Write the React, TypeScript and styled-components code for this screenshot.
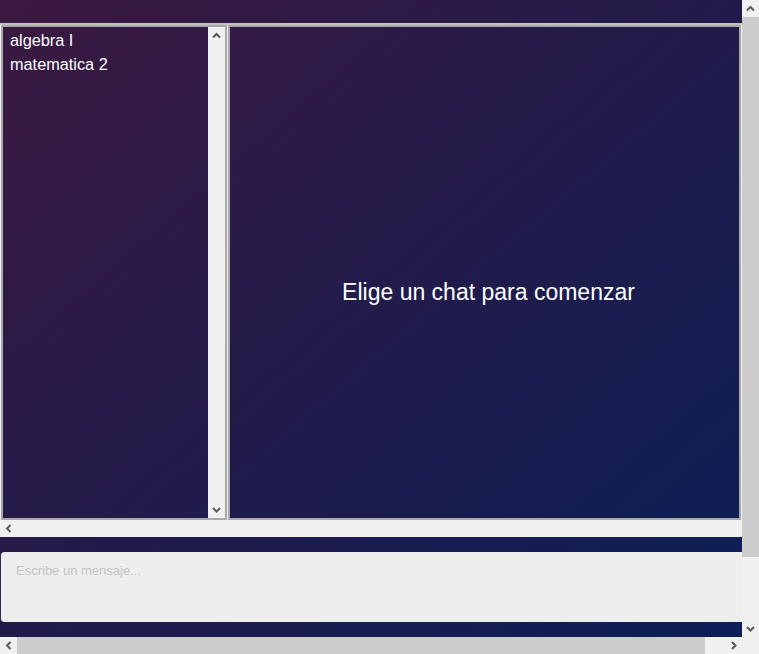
import React from 'react';
import styled, { createGlobalStyle, css } from 'styled-components';

const GlobalStyle = createGlobalStyle`
  html, body {
    margin: 0;
    padding: 0;
    overflow: hidden;
    font-family: "Liberation Sans", Arial, sans-serif;
  }
  * {
    box-sizing: border-box;
  }
`

const gradient = css`
  background: linear-gradient(to bottom right, #3c1940 0%, #231b4a 45%, #0a1f57 100%);
  background-attachment: fixed;
`

const Window = styled.div`
  display: grid;
  grid-template-columns: 742px 17px;
  grid-template-rows: 637px 17px;
  width: 759px;
  height: 654px;
`

const Viewport = styled.div`
  overflow: hidden;
`

const Page = styled.div`
  ${gradient};
  width: 763px;
  height: 711px;
  padding-top: 23px;
  display: flex;
  flex-direction: column;
`

const ChatFrame = styled.div`
  background: #f0f0f0;
  border-top: 2px solid #c3c3c3;
  display: flex;
  flex-direction: column;
`

const PanelRow = styled.div`
  display: flex;
  gap: 1px;
  padding: 0 1px;
  height: 495px;
`

const Panel = styled.div<{ $width: number }>`
  ${gradient};
  width: ${p => p.$width}px;
  border: 2px solid #a9a9a9;
  display: flex;
`

const ChatList = styled.ul`
  flex: 1;
  margin: 0;
  padding: 1px 0;
  list-style: none;
`

const ChatItem = styled.li`
  padding: 4px 7px;
  color: #ffffff;
  font-size: 16.3px;
  line-height: 16px;
  cursor: pointer;
`

const EmptyChat = styled.div`
  flex: 1;
  display: flex;
  align-items: center;
  justify-content: center;
  padding: 40px 0 0 8px;
  color: #ffffff;
  font-size: 23px;
`

const Scrollbar = styled.div<{ $vertical?: boolean }>`
  display: flex;
  flex-direction: ${p => (p.$vertical ? 'column' : 'row')};
  background: #f0f0f0;
  ${p => (p.$vertical ? 'width: 17px;' : 'height: 17px;')}
  flex-shrink: 0;
`

const Thumb = styled.div<{ $vertical?: boolean; $size: number }>`
  background: #cdcdcd;
  flex-shrink: 0;
  ${p => (p.$vertical ? `height: ${p.$size}px;` : `width: ${p.$size}px;`)}
`

const Track = styled.div`
  flex: 1;
`

const ArrowBox = styled.div`
  width: 17px;
  height: 17px;
  flex-shrink: 0;
  display: flex;
  align-items: center;
  justify-content: center;
`

const Corner = styled.div`
  background: #f0f0f0;
`

const Composer = styled.textarea`
  margin-top: 15px;
  width: 100%;
  height: 70px;
  resize: none;
  border: none;
  border-left: 1px solid #2a2c55;
  border-radius: 4px;
  background: #eeeeee;
  padding: 11px 15px;
  font-family: "Liberation Sans", Arial, sans-serif;
  font-size: 13px;
  line-height: 16px;
  outline: none;
  &::placeholder {
    color: #c3c3c3;
  }
`

type Dir = 'up' | 'down' | 'left' | 'right'

const paths: Record<Dir, string> = {
  up: 'M5 10.5 L8.5 7 L12 10.5',
  down: 'M5 7 L8.5 10.5 L12 7',
  left: 'M10.5 5 L7 8.5 L10.5 12',
  right: 'M7 5 L10.5 8.5 L7 12',
}

const Arrow: React.FC<{ dir: Dir }> = ({ dir }) => (
  <ArrowBox>
    <svg width="17" height="17" viewBox="0 0 17 17">
      <path d={paths[dir]} fill="none" stroke="#5a5a5a" strokeWidth="2" />
    </svg>
  </ArrowBox>
)

const chats = ['algebra I', 'matematica 2']

const App: React.FC = () => {
  return (
    <>
      <GlobalStyle />
      <Window>
        <Viewport>
          <Page>
            <ChatFrame>
              <PanelRow>
                <Panel $width={226}>
                  <ChatList>
                    {chats.map((name, index) => (
                      <ChatItem key={index}>{name}</ChatItem>
                    ))}
                  </ChatList>
                  <Scrollbar $vertical>
                    <Arrow dir="up" />
                    <Track />
                    <Arrow dir="down" />
                  </Scrollbar>
                </Panel>
                <Panel $width={513}>
                  <EmptyChat>Elige un chat para comenzar</EmptyChat>
                </Panel>
              </PanelRow>
              <Scrollbar>
                <Arrow dir="left" />
                <Track />
              </Scrollbar>
            </ChatFrame>
            <Composer placeholder="Escribe un mensaje..." />
          </Page>
        </Viewport>
        <Scrollbar $vertical>
          <Arrow dir="up" />
          <Thumb $vertical $size={540} />
          <Track />
          <Arrow dir="down" />
        </Scrollbar>
        <Scrollbar>
          <Arrow dir="left" />
          <Thumb $size={688} />
          <Track />
          <Arrow dir="right" />
        </Scrollbar>
        <Corner />
      </Window>
    </>
  )
}

export default App
